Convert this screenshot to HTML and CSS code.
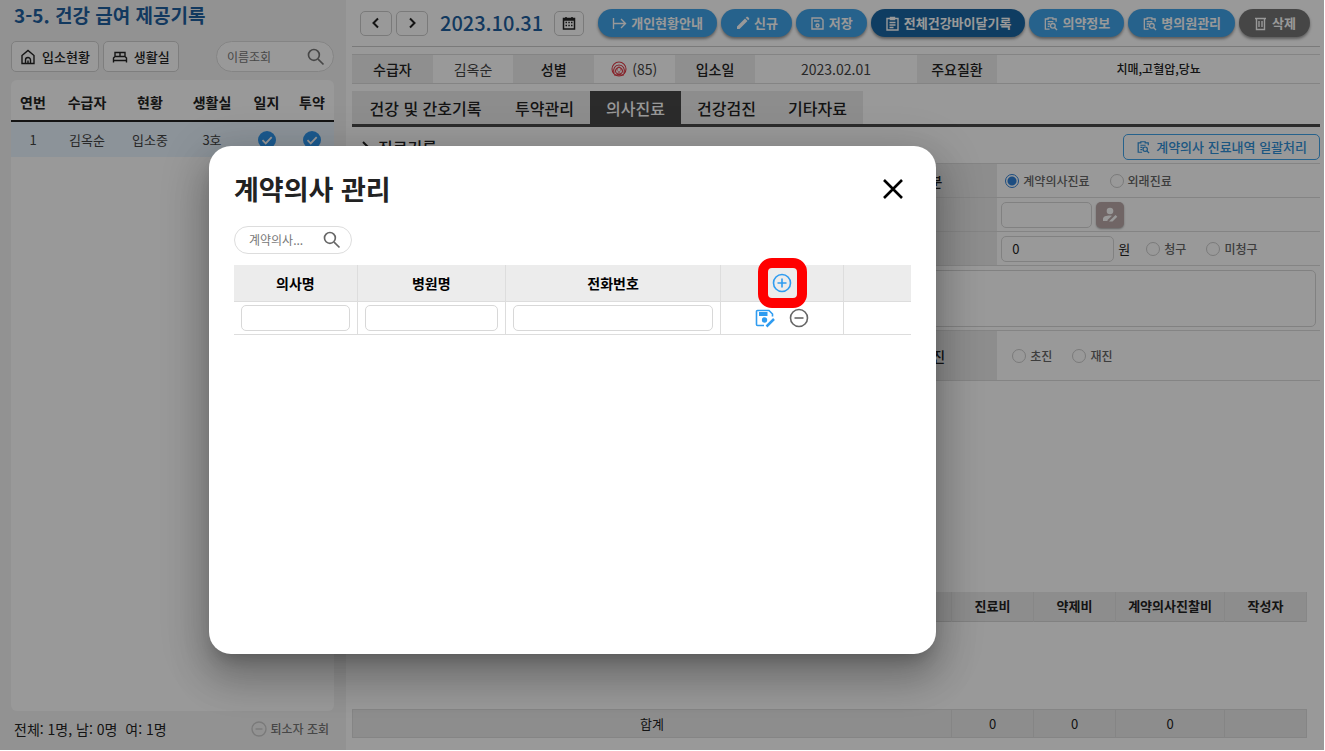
FILE: index.html
```html
<!DOCTYPE html>
<html lang="ko">
<head>
<meta charset="utf-8">
<meta name="viewport" content="width=device-width, initial-scale=1">
<title>건강 급여 제공기록</title>
<link rel="stylesheet" href="styles.css">
</head>
<body>
<svg class="defs" aria-hidden="true">
  <symbol id="i-search" viewBox="0 0 24 24"><circle cx="9.5" cy="9.5" r="6.5"/><path d="M14.5 14.5 21 21"/></symbol>
  <symbol id="i-check" viewBox="0 0 20 20"><circle cx="10" cy="10" r="10" fill="#3097ee" stroke="none"/><path d="m5 10.200 3.600 3.600 6.600-7" fill="none" stroke="#fff" stroke-width="2"/></symbol>
  <symbol id="i-docsearch" viewBox="0 0 16 16"><path d="M14 6V3.200H10.500V2H5.500v1.200H2.500V14H7M5 6h6M5 8.500h2.500M5 11h2" /><circle cx="10.500" cy="10.500" r="2.500"/><path d="m12.300 12.300 2.700 2.700"/></symbol>
</svg>
<div class="app">
  <aside class="side">
    <h1 class="side-title">3-5. 건강 급여 제공기록</h1>
    <div class="side-tools">
      <button class="chip" type="button"><svg class="icon16 line" viewBox="0 0 16 16"><path d="M2 6.500 8 1.500l6 5V14.500H2zM5.500 14v-3a2.500 2.500 0 0 1 5 0v3M8 14v-2.500"/></svg>입소현황</button>
      <button class="chip" type="button"><svg class="icon16 line" viewBox="0 0 16 16"><path d="M1.500 13.500V9L3 7.500h10L14.500 9v4.500M1.500 11.500h13M3 7.500V3.500h10v4M8 3.500v4"/></svg>생활실</button>
      <label class="search side-search"><input type="text" placeholder="이름조회" aria-label="이름조회"><svg class="icon20"><use href="#i-search"/></svg></label>
    </div>
    <div class="panel">
      <table class="people">
        <colgroup><col class="p1"><col class="p2"><col class="p3"><col class="p3"><col class="p4"><col class="p1"></colgroup>
        <thead><tr><th>연번</th><th>수급자</th><th>현황</th><th>생활실</th><th>일지</th><th>투약</th></tr></thead>
        <tbody><tr><td>1</td><td>김옥순</td><td>입소중</td><td>3호</td><td><svg class="mark"><use href="#i-check"/></svg></td><td><svg class="mark"><use href="#i-check"/></svg></td></tr></tbody>
      </table>
    </div>
    <footer class="side-foot"><span>전체: 1명, 남: 0명&nbsp; 여: 1명</span>
      <button class="leave" type="button"><svg class="icon16" viewBox="0 0 16 16"><circle cx="8" cy="8" r="7"/><path d="M4.500 8h7"/></svg>퇴소자 조회</button></footer>
  </aside>

  <main class="main">
    <header class="bar">
      <button class="nav" type="button" aria-label="이전"><svg class="icon16" viewBox="0 0 16 16"><path d="m10 3.500-4.500 4.500L10 12.500"/></svg></button>
      <button class="nav" type="button" aria-label="다음"><svg class="icon16" viewBox="0 0 16 16"><path d="m6 3.500 4.500 4.500L6 12.500"/></svg></button>
      <time class="date">2023.10.31</time>
      <button class="nav cal" type="button" aria-label="달력"><svg class="icon14" viewBox="0 0 14 14"><path d="M1.500 2.500h11v10.500h-11zM4 1v2M10 1v2M1.500 4h11" /><path d="M3.500 6.500h1.500M6.300 6.500h1.500M9 6.500h1.500M3.500 9.500h1.500M6.300 9.500h1.500M9 9.500h1.500"/></svg></button>
      <div class="actions">
        <button class="pill" type="button"><svg class="icon15" viewBox="0 0 15 15"><path d="M1.500 2v11M2 7.500h11M9 3l4.500 4.500L9 12"/></svg>개인현황안내</button>
        <button class="pill" type="button"><svg class="icon15" viewBox="0 0 15 15"><path fill="currentColor" stroke="none" d="M2 10.500 10 2.500l2.500 2.500-8 8H2zM10.700 1.800l1-1h1l1.500 1.500v1l-1 1z"/></svg>신규</button>
        <button class="pill" type="button"><svg class="icon15" viewBox="0 0 15 15"><path d="M2 2h9l2 2v9H2zM4 5h5.500"/><circle cx="7.500" cy="9.500" r="1.500"/></svg>저장</button>
        <button class="pill deep" type="button"><svg class="icon15" viewBox="0 0 15 15"><path d="M2 2.500h11V14H2zM5.500 1.500h4v2h-4zM4.500 6.500h6M4.500 9h6M4.500 11.500h4"/></svg>전체건강바이달기록</button>
        <button class="pill" type="button"><svg class="icon15"><use href="#i-docsearch"/></svg>의약정보</button>
        <button class="pill" type="button"><svg class="icon15"><use href="#i-docsearch"/></svg>병의원관리</button>
        <button class="pill gray" type="button"><svg class="icon15" viewBox="0 0 15 15"><path d="M2 2.500h11M3.500 2.500v11h8v-11M6 5v6M9 5v6"/></svg>삭제</button>
      </div>
    </header>

    <dl class="info">
      <dt>수급자</dt><dd>김옥순</dd>
      <dt>성별</dt><dd><svg class="face" viewBox="0 0 16 16"><circle cx="8" cy="8" r="7"/><path d="M3 12.500C1.500 8 4 4 8 4s6.500 4 5 8.500M4.500 10c0-2 1.500-3 3.500-4 2 1 3.500 2 3.500 4s-2 3-3.500 3-3.500-1-3.500-3zM6 9h.8M9.200 9h.8M6.800 11h2.400M3 14h10"/></svg> (85)</dd>
      <dt>입소일</dt><dd class="span2">2023.02.01</dd>
      <dt>주요질환</dt><dd class="span4">치매,고혈압,당뇨</dd>
    </dl>

    <nav class="tabs">
      <button type="button">건강 및 간호기록</button><button type="button">투약관리</button><button type="button" class="on">의사진료</button><button type="button">건강검진</button><button type="button">기타자료</button>
    </nav>

    <div class="section">
      <h2><svg class="icon16" viewBox="0 0 16 16"><path d="m6 3 5 5-5 5"/></svg>진료기록</h2>
      <button class="outline" type="button"><svg class="icon14"><use href="#i-docsearch"/></svg>계약의사 진료내역 일괄처리</button>
    </div>

    <form class="form">
      <div class="row">
        <span class="lab"></span><div class="cell"></div>
        <span class="lab">진료구분</span>
        <div class="cell"><label class="radio"><input type="radio" name="kind" checked>계약의사진료</label><label class="radio"><input type="radio" name="kind">외래진료</label></div>
      </div>
      <div class="row">
        <span class="lab"></span><div class="cell"></div><span class="lab"></span>
        <div class="cell tight"><input class="box doctor" type="text" aria-label="의사"><button class="pick" type="button" aria-label="의사 선택"><svg class="icon18" viewBox="0 0 18 18"><circle cx="9" cy="5" r="3.300"/><path d="M2 15v-2c0-2.500 3-3.500 7-3.500l2 .3L6.500 14v1zM8 15.500l6.500-6.500 1.800 1.800-4.800 4.700z"/></svg></button></div>
      </div>
      <div class="row">
        <span class="lab"></span><div class="cell"></div><span class="lab"></span>
        <div class="cell tight"><input class="box fee" type="text" value="0" aria-label="금액"><span class="won">원</span><label class="radio"><input type="radio" name="claim">청구</label><label class="radio"><input type="radio" name="claim">미청구</label></div>
      </div>
      <div class="row memo"><span class="lab"></span><div class="cell wide"><textarea aria-label="내용"></textarea></div></div>
      <div class="row visit">
        <span class="lab"></span><div class="cell"></div><span class="lab">초진/재진</span>
        <div class="cell"><label class="radio"><input type="radio" name="visit">초진</label><label class="radio"><input type="radio" name="visit">재진</label></div>
      </div>
    </form>

    <table class="list">
      <colgroup><col><col class="c1"><col class="c1"><col class="c2"><col class="c1"></colgroup>
      <thead><tr><th></th><th>진료비</th><th>약제비</th><th>계약의사진찰비</th><th>작성자</th></tr></thead>
      <tbody><tr><td colspan="5"></td></tr></tbody>
    </table>
    <table class="list total">
      <colgroup><col><col class="c1"><col class="c1"><col class="c2"><col class="c1"></colgroup>
      <tbody><tr><td>합계</td><td>0</td><td>0</td><td>0</td><td></td></tr></tbody>
    </table>
  </main>

  <div class="shade">
    <section class="modal" role="dialog" aria-labelledby="dlg">
      <header class="modal-head"><h2 id="dlg">계약의사 관리</h2>
        <button type="button" class="close" aria-label="닫기"><svg viewBox="0 0 22 22"><path d="m2 2 18 18M20 2 2 20"/></svg></button></header>
      <label class="search modal-search"><input type="text" placeholder="계약의사..." aria-label="계약의사 조회"><svg class="icon20"><use href="#i-search"/></svg></label>
      <table class="docs">
        <colgroup><col class="d1"><col class="d2"><col class="d3"><col class="d1"><col class="d4"></colgroup>
        <thead><tr><th>의사명</th><th>병원명</th><th>전화번호</th><th><div class="add"><button class="plain blue" type="button" aria-label="추가"><svg class="icon20" viewBox="0 0 20 20"><circle cx="10" cy="10" r="8.500"/><path d="M10 5.500v9M5.500 10h9"/></svg></button><span class="spot"></span></div></th><th></th></tr></thead>
        <tbody><tr>
          <td><input class="box" type="text" aria-label="의사명"></td><td><input class="box" type="text" aria-label="병원명"></td><td><input class="box" type="text" aria-label="전화번호"></td>
          <td><div class="ops"><button class="plain blue" type="button" aria-label="저장"><svg class="icon20" viewBox="0 0 20 20"><path stroke-width="1.600" d="M9 17.500H2.500a1 1 0 0 1-1-1V3.500a1 1 0 0 1 1-1H14L17.500 6v2.500"/><path fill="currentColor" stroke="none" d="M4 4h8.500v4H4z"/><circle cx="9.500" cy="12" r="2.700" fill="currentColor" stroke="none"/><path stroke-width="2.500" d="m11.500 18.500 7.500-7.500"/></svg></button><button class="plain" type="button" aria-label="삭제"><svg class="icon20" viewBox="0 0 20 20"><circle cx="10" cy="10" r="8.500"/><path d="M5.500 10h9"/></svg></button></div></td><td></td>
        </tr></tbody>
      </table>
    </section>
  </div>
</div>
</body>
</html>
```
FILE: styles.css
```css
* { box-sizing: border-box; }
body { margin: 0; background: #fff; color: #222; font-family: "Noto Sans CJK KR", "Noto Sans", sans-serif; font-size: 14px; line-height: 20px; }
button, input, textarea { font: inherit; color: inherit; }
button { padding: 0; cursor: pointer; white-space: nowrap; }
h1, h2, dl, dd { margin: 0; }
svg { flex: none; fill: none; stroke: currentColor; stroke-width: 1.4; }
table { border-collapse: collapse; table-layout: fixed; width: 100%; }
.defs { position: absolute; width: 0; height: 0; }
.icon14 { width: 14px; height: 14px; }
.icon15 { width: 15px; height: 15px; }
.icon16 { width: 16px; height: 16px; }
.icon18 { width: 18px; height: 18px; fill: currentColor; stroke: none; }
.icon20 { width: 20px; height: 20px; }

.app { position: relative; display: flex; min-height: calc(100vh - 1px); margin: 0 1px 1px 0; }

.side { width: 346px; flex: none; display: flex; flex-direction: column; padding: 0 12px 0 11px; background: #f4f4f4; }
.side-title { padding: 2px 3px 0; font-size: 19px; line-height: 26px; color: #1f5f9e; font-weight: 700; }
.side-tools { display: flex; gap: 4px; margin-top: 13px; }
.chip { display: flex; align-items: center; gap: 6px; height: 31px; padding: 0 8px; border: 1px solid #d2d2d2; border-radius: 5px; background: #fff; font-size: 13px; font-weight: 500; }
.search { display: flex; align-items: center; width: 118px; border: 1px solid #ddd; border-radius: 16px; background: #fff; color: #777; }
.search input { flex: 1; min-width: 0; padding: 0; border: 0; outline: 0; background: none; font-size: 12px; }
.search input::placeholder { color: #777; opacity: 1; }
.search svg { stroke-width: 2; }
.side-search { height: 31px; margin-left: auto; padding: 0 7px 0 10px; }
.panel { flex: 1; margin-top: 8px; border-radius: 6px; background: #fff; overflow: hidden; }
.people th { height: 41px; padding: 3px 0 0; border-bottom: 2px solid #222; font-weight: 700; }
.people td { height: 36px; padding: 0; text-align: center; background: #eaf5ff; color: #444; font-size: 13px; }
.p1 { width: 44px; } .p2 { width: 64px; } .p3 { width: 62px; } .p4 { width: 47px; }
.mark { display: block; width: 18px; height: 18px; margin: auto; }
.side-foot { display: flex; justify-content: space-between; align-items: center; height: 39px; padding: 0 5px 3px 3px; }
.leave { display: flex; align-items: center; gap: 3px; border: 0; background: none; font-size: 12px; font-weight: 500; color: #777; }
.leave svg { color: #ccc; }

.main { flex: 1; min-width: 0; display: flex; flex-direction: column; padding: 0 4px 12px 6px; }
.bar { display: flex; align-items: center; gap: 4px; height: 47px; padding: 0 8px; border-bottom: 1px solid #ccc; }
.nav { display: grid; place-items: center; width: 32px; height: 25px; border: 1px solid #ccc; border-radius: 5px; background: #fff; }
.nav svg { stroke-width: 2; }
.date { margin: 0 7px 0 8px; font-size: 20px; font-weight: 500; color: #1f5f9e; }
.cal { width: 30px; }
.cal svg { stroke-width: 1.5; }
.actions { display: flex; gap: 4px; margin-left: 10px; }
.pill { display: flex; align-items: center; gap: 4px; height: 28px; padding: 0 14px; border: 0; border-radius: 14px; background: #40a3e9; color: #fff; font-size: 13px; font-weight: 700; box-shadow: 0 2px 3px #0006; }
.deep { background: #1a67a3; }
.gray { background: #757575; }

.info { display: grid; grid-template-columns: repeat(12, 1fr); margin-top: 7px; border: solid #dcdcdc; border-width: 1px 0; line-height: 28px; text-align: center; }
.info dt { background: #eee; font-weight: 500; }
.info dd { display: flex; justify-content: center; align-items: center; gap: 5px; color: #444; }
.info .span2 { grid-column: span 2; }
.info .span4 { grid-column: span 4; font-size: 12px; font-weight: 500; color: #222; }
.face { width: 16px; height: 16px; color: #e03a46; stroke-width: 1.1; }

.tabs { display: grid; grid-template-columns: 147px repeat(4, 91px); margin-top: 7px; border-bottom: 3px solid #484848; }
.tabs button { height: 33px; border: 0; background: #ececec; font-size: 16px; font-weight: 500; }
.tabs .on { background: #484848; color: #fff; }

.section { display: flex; justify-content: space-between; align-items: center; height: 36px; padding-top: 4px; }
.section h2 { display: flex; align-items: center; gap: 5px; padding-left: 5px; font-size: 16px; line-height: 20px; font-weight: 500; }
.section h2 svg { stroke-width: 2; }
.outline { display: flex; align-items: center; gap: 6px; height: 26px; padding: 0 12px; border: 1px solid #40a3e9; border-radius: 5px; background: #fff; color: #2f8fd8; font-size: 13px; font-weight: 500; }

.form { border-top: 1px solid #dcdcdc; }
.row { display: grid; grid-template-columns: 2fr 4fr 2fr 4fr; min-height: 34px; border-bottom: 1px solid #dcdcdc; }
.lab { display: grid; place-items: center; background: #ececec; font-weight: 500; }
.cell { display: flex; align-items: center; gap: 20px; padding: 0 8px; }
.tight { gap: 4px; padding: 0 4px; }
.tight .radio { margin-left: 12px; }
.tight .radio + .radio { margin-left: 16px; }
.wide { grid-column: span 3; padding: 3px 4px; }
.memo { min-height: 65px; }
.visit { min-height: 50px; }
.visit .cell { padding: 0 15px; }
.radio { display: flex; align-items: center; gap: 4px; font-size: 12px; font-weight: 500; color: #666; }
.radio input { appearance: none; width: 14px; height: 14px; margin: 0; border: 1px solid #ccc; border-radius: 50%; background: #fff; }
.radio input:checked { border-color: #2f80d8; background: radial-gradient(#2f80d8 0 4px, #fff 5px); }
.box { display: block; width: 100%; height: 26px; padding: 0 10px; border: 1px solid #d8d8d8; border-radius: 5px; background: #fff; font-size: 13px; }
.doctor { width: 91px; }
.fee { width: 113px; }
.won { font-size: 13px; }
.pick { display: grid; place-items: center; width: 28px; height: 26px; border: 0; border-radius: 5px; background: #bba9a9; color: #fff; box-shadow: 0 1px 2px #0005; }
textarea { display: block; width: 100%; height: 57px; border: 1px solid #d8d8d8; border-radius: 5px; background: #fff; resize: none; }

.list { width: calc(100% - 13px); margin-top: 211px; font-size: 13px; text-align: center; }
.list th { height: 29px; padding: 0; border-right: 1px solid #e2e2e2; background: #ececec; font-weight: 700; }
.list thead { border-bottom: 1px solid #d8d8d8; }
.c1 { width: 82px; } .c2 { width: 109px; }
.total { margin-top: auto; }
.total td { height: 28px; padding: 0; border: 1px solid #dedede; background: #ececec; }

.shade { position: absolute; inset: 0; background: rgba(0, 0, 0, .4); }
.modal { position: absolute; left: 209px; top: 146px; width: 727px; max-width: 100%; min-height: 508px; padding: 25px; border-radius: 22px; background: #fff; box-shadow: 0 11px 15px -7px #0003, 0 24px 38px 3px #0003, 0 9px 46px 8px #0002; }
.modal-head { display: flex; justify-content: space-between; align-items: center; height: 36px; }
.modal-head h2 { font-size: 27px; line-height: 36px; font-weight: 700; }
.close { display: grid; place-items: center; width: 36px; height: 36px; border: 0; background: none; color: #000; }
.close svg { width: 22px; height: 22px; stroke-width: 2.6; }
.modal-search { height: 28px; margin-top: 19px; padding: 0 9px 0 14px; }
.modal-search input { margin-right: 12px; }
.modal-search svg { color: #666; }
.docs { margin-top: 11px; color: #000; }
.docs th { height: 36px; padding: 0; background: #ececec; font-weight: 700; }
.docs td { height: 32px; padding: 3px 7px; }
.docs th, .docs td { border: solid #ddd; border-width: 0 1px 1px 0; }
.docs th:last-child, .docs td:last-child { border-right: 0; }
.d1 { width: 123px; } .d2 { width: 148px; } .d3 { width: 215px; } .d4 { width: 67px; }
.plain { display: block; border: 0; background: none; color: #666; line-height: 0; }
.plain svg { stroke-width: 1.6; }
.blue { color: #2f9cf0; }
.add { position: relative; display: grid; place-items: center; }
.spot { position: absolute; width: 49px; height: 50px; border: 10px solid #f00; border-radius: 14px; pointer-events: none; }
.ops { display: flex; justify-content: center; gap: 14px; }
```
